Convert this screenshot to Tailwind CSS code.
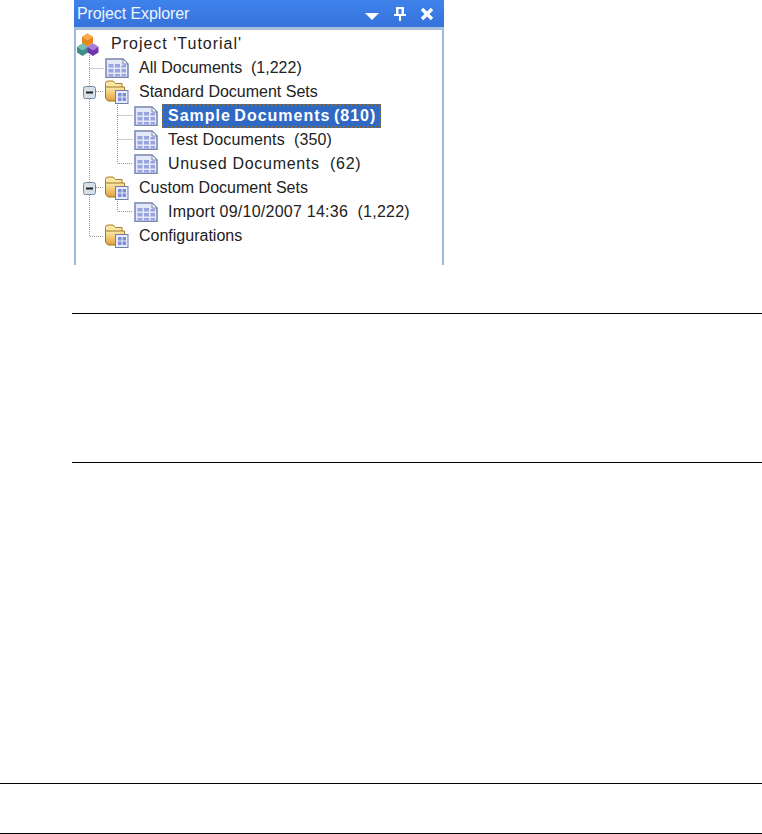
<!DOCTYPE html>
<html lang="en">
<head>
  <meta charset="UTF-8">
  <title>Project Explorer</title>
  <script src="https://cdn.jsdelivr.net/npm/@tailwindcss/browser@4"></script>
</head>
<body class="bg-white w-[762px] h-[834px] overflow-hidden font-['Liberation_Sans',sans-serif] text-[#222]">
  <svg class="absolute w-0 h-0">
    <defs>
      <linearGradient id="folderFront" x1="0" y1="0" x2="0" y2="1">
        <stop offset="0" stop-color="#fdeaa8"/>
        <stop offset="1" stop-color="#dfa23a"/>
      </linearGradient>
    </defs>
    <symbol id="doc" viewBox="0 0 24 20">
      <path d="M1 1H18L23 6V19.500H1Z" fill="#e4e8f8" stroke="#7384ad" stroke-width="1.500"/>
      <path d="M18 1V6H23Z" fill="#fff" stroke="#7384ad"/>
      <path d="M3.500 6h5v3.500h-5zM10 6h5v3.500h-5zM16.500 7h4.500v2.500h-4.500zM3.500 11h5v3.500h-5zM10 11h5v3.500h-5zM16.500 11h4.500v3.500h-4.500zM3.500 16h5v2.500h-5zM10 16h5v2.500h-5zM16.500 16h4.500v2.500h-4.500z" fill="#99a5e2"/>
    </symbol>
    <symbol id="folder" viewBox="0 0 25 24">
      <path d="M1.500 8V3.500Q1.500 1 4 1H9L11.500 3.500H18V8Z" fill="#f9e6a2" stroke="#a8842c"/>
      <path d="M1.500 7H20.500V21H4L1.500 18Z" fill="url(#folderFront)" stroke="#9c7a28"/>
      <rect x="11.500" y="10.500" width="12.500" height="13" fill="#e6eafa" stroke="#6f7fa8"/>
      <path d="M14 13h3.500v3.500h-3.500zM18.500 13h3.500v3.500h-3.500zM14 17.500h3.500v3.500h-3.500zM18.500 17.500h3.500v3.500h-3.500z" fill="#7f90d2"/>
    </symbol>
    <symbol id="minus" viewBox="0 0 13 13">
      <rect x=".5" y=".5" width="12" height="12" rx="2" fill="#d5e0e8" stroke="#6f8aa0"/>
      <path d="M3 5.500H10V7.500H3Z" fill="#222"/>
    </symbol>
  </svg>

  <section class="ml-[74px] w-[370px] h-[265px] flex flex-col">
    <header class="h-[27px] bg-gradient-to-b from-[#3f82ec] to-[#3673dc] flex items-center pl-[3px] pr-[10px] text-[16px] tracking-[-0.1px] text-[#eef4ff]">
      <span class="flex-1">Project Explorer</span>
      <svg class="w-[14px] h-[8px] mr-[15px] mt-[5px]" viewBox="0 0 14 8"><path d="M0 1H14L7 8Z" fill="#fff"/></svg>
      <svg class="w-[12px] h-[15px] mr-[14px]" viewBox="0 0 12 15"><path d="M2 1H10V8H12V10H7V15H5V10H0V8H2ZM4.500 3V8H7.500V3Z" fill="#fff" fill-rule="evenodd"/></svg>
      <svg class="w-[14px] h-[14px]" viewBox="0 0 14 14"><path d="M2 2L12 12M12 2L2 12" stroke="#fff" stroke-width="3.500"/></svg>
    </header>
    <div class="relative flex-1 bg-white border-t-[3px] border-x-2 border-t-[#a9c0dd] border-x-[#9db8d8] text-[16px] pt-[2px] leading-[24px]">
      <!-- tree connectors -->
      <svg class="absolute left-[-2px] top-[-3px]" width="370" height="238" fill="none" stroke="#999" stroke-dasharray="1 1">
        <path d="M15.500 28V209.500H30M15.500 41.500H30M43.500 76V136.500H59M43.500 88.500H59M43.500 112.500H59M43.500 172V184.500H59M22 64.500H30M22 160.500H30"/>
      </svg>
      <div class="h-[24px] flex items-center relative">
        <svg class="w-[22px] h-[25px] ml-[1px]" viewBox="0 0 22 25">
          <path d="M5 5L10.500 1.500L16 5V11L10.500 14.500L5 11Z" fill="#e8851f"/>
          <path d="M5 5L10.500 1.500L16 5L10.500 8.500Z" fill="#f7ab4a"/>
          <path d="M0 15L5.500 11.500L11 15V20.500L5.500 24L0 20.500Z" fill="#3f8f88"/>
          <path d="M0 15L5.500 11.500L11 15L5.500 18.500Z" fill="#79c0b2"/>
          <path d="M10.500 15L16 11.500L21.500 15V20.500L16 24L10.500 20.500Z" fill="#6f35ad"/>
          <path d="M10.500 15L16 11.500L21.500 15L16 18.500Z" fill="#a77be0"/>
        </svg>
        <span class="ml-[12px] tracking-[1px]">Project 'Tutorial'</span>
      </div>
      <div class="h-[24px] flex items-center pl-[29px] relative">
        <svg class="w-[24px] h-[20px]"><use href="#doc"/></svg><span class="ml-[10px]">All Documents&nbsp; (1,222)</span>
      </div>
      <div class="h-[24px] flex items-center pl-[7px] relative">
        <svg class="w-[13px] h-[13px]"><use href="#minus"/></svg>
        <svg class="w-[25px] h-[24px] ml-[8px]"><use href="#folder"/></svg><span class="ml-[10px]">Standard Document Sets</span>
      </div>
      <div class="h-[24px] flex items-center pl-[58px] relative">
        <svg class="w-[24px] h-[20px]"><use href="#doc"/></svg>
        <span class="ml-[4px] w-[219px] h-[24px] pl-[4px] bg-[#2f69c4] text-white font-bold tracking-[1px] [word-spacing:-2px] border-2 border-dotted border-[#8a6a30] leading-[20px] whitespace-nowrap">Sample Documents (810)</span>
      </div>
      <div class="h-[24px] flex items-center pl-[58px] relative">
        <svg class="w-[24px] h-[20px]"><use href="#doc"/></svg><span class="ml-[10px] tracking-[0.15px]">Test Documents&nbsp; (350)</span>
      </div>
      <div class="h-[24px] flex items-center pl-[58px] relative">
        <svg class="w-[24px] h-[20px]"><use href="#doc"/></svg><span class="ml-[10px] tracking-[0.7px]">Unused Documents&nbsp; (62)</span>
      </div>
      <div class="h-[24px] flex items-center pl-[7px] relative">
        <svg class="w-[13px] h-[13px]"><use href="#minus"/></svg>
        <svg class="w-[25px] h-[24px] ml-[8px]"><use href="#folder"/></svg><span class="ml-[10px]">Custom Document Sets</span>
      </div>
      <div class="h-[24px] flex items-center pl-[58px] relative">
        <svg class="w-[24px] h-[20px]"><use href="#doc"/></svg><span class="ml-[10px] tracking-[0.25px]">Import 09/10/2007 14:36&nbsp; (1,222)</span>
      </div>
      <div class="h-[24px] flex items-center pl-[28px] relative">
        <svg class="w-[25px] h-[24px]"><use href="#folder"/></svg><span class="ml-[10px]">Configurations</span>
      </div>
    </div>
  </section>

  <div class="mt-[48px] ml-[72px] border-t border-black"></div>
  <div class="mt-[148px] ml-[72px] border-t border-black"></div>
  <div class="mt-[320px] border-t border-black"></div>
  <div class="mt-[49px] border-t border-black"></div>
</body>
</html>
